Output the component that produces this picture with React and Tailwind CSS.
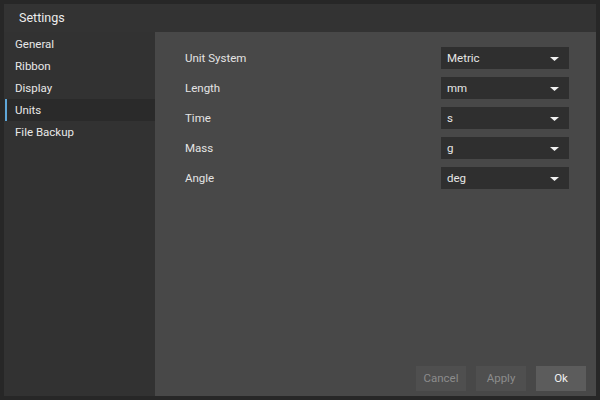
const sections = ["General", "Ribbon", "Display", "Units", "File Backup"];

const units = [
  { label: "Unit System", value: "Metric" },
  { label: "Length", value: "mm" },
  { label: "Time", value: "s" },
  { label: "Mass", value: "g" },
  { label: "Angle", value: "deg" },
];

function Dropdown({ value }) {
  return (
    <div className="flex h-[22px] w-[128px] items-center justify-between bg-[#2f2f2f] pl-[6px] pr-[10px] pt-[1px] text-[11.5px] text-[#e6e6e6]">
      <span>{value}</span>
      <svg width="9" height="4" viewBox="0 0 9 4">
        <path d="M0 0 L9 0 L4.5 4 Z" fill="#f2f2f2" />
      </svg>
    </div>
  );
}

export default function App() {
  return (
    <div
      className="h-[400px] w-[600px] bg-[#272727] p-[4px]"
      style={{ fontFamily: "Roboto, 'Liberation Sans', sans-serif" }}
    >
      <div className="flex h-full w-full flex-col bg-[#333333]">
        <div className="flex h-[28px] shrink-0 items-center pl-[15px] pt-[1px] text-[12.5px] text-[#ececec]">
          Settings
        </div>
        <div className="flex min-h-0 flex-1">
          <div className="w-[151px] shrink-0 bg-[#323232] pt-[1px]">
            {sections.map((s) => (
              <div
                key={s}
                className={`relative flex h-[22px] items-center pl-[11px] pt-[1px] text-[11.5px] text-[#e8e8e8] ${
                  s === "Units" ? "bg-[#2a2a2a]" : ""
                }`}
              >
                {s === "Units" ? (
                  <span className="absolute left-[1px] top-0 h-full w-[2px] bg-[#5fa7d9]" />
                ) : null}
                {s}
              </div>
            ))}
          </div>
          <div className="flex flex-1 flex-col bg-[#484848]">
            <div className="flex flex-col gap-[8px] pt-[15px]">
              {units.map((u) => (
                <div key={u.label} className="flex h-[22px] items-center">
                  <span className="w-[286px] pl-[30px] pt-[1px] text-[11.5px] text-[#e4e4e4]">{u.label}</span>
                  <Dropdown value={u.value} />
                </div>
              ))}
            </div>
            <div className="mt-auto flex justify-end gap-[10px] pb-[5px] pr-[10px]">
              <button className="h-[25px] w-[50px] bg-[#4f4f4f] pt-[1px] text-[11.5px] text-[#8c8c8c]">Cancel</button>
              <button className="h-[25px] w-[50px] bg-[#4f4f4f] pt-[1px] text-[11.5px] text-[#8c8c8c]">Apply</button>
              <button className="h-[25px] w-[50px] bg-[#5c5c5c] pt-[1px] text-[11.5px] text-[#f0f0f0]">Ok</button>
            </div>
          </div>
        </div>
      </div>
    </div>
  );
}
